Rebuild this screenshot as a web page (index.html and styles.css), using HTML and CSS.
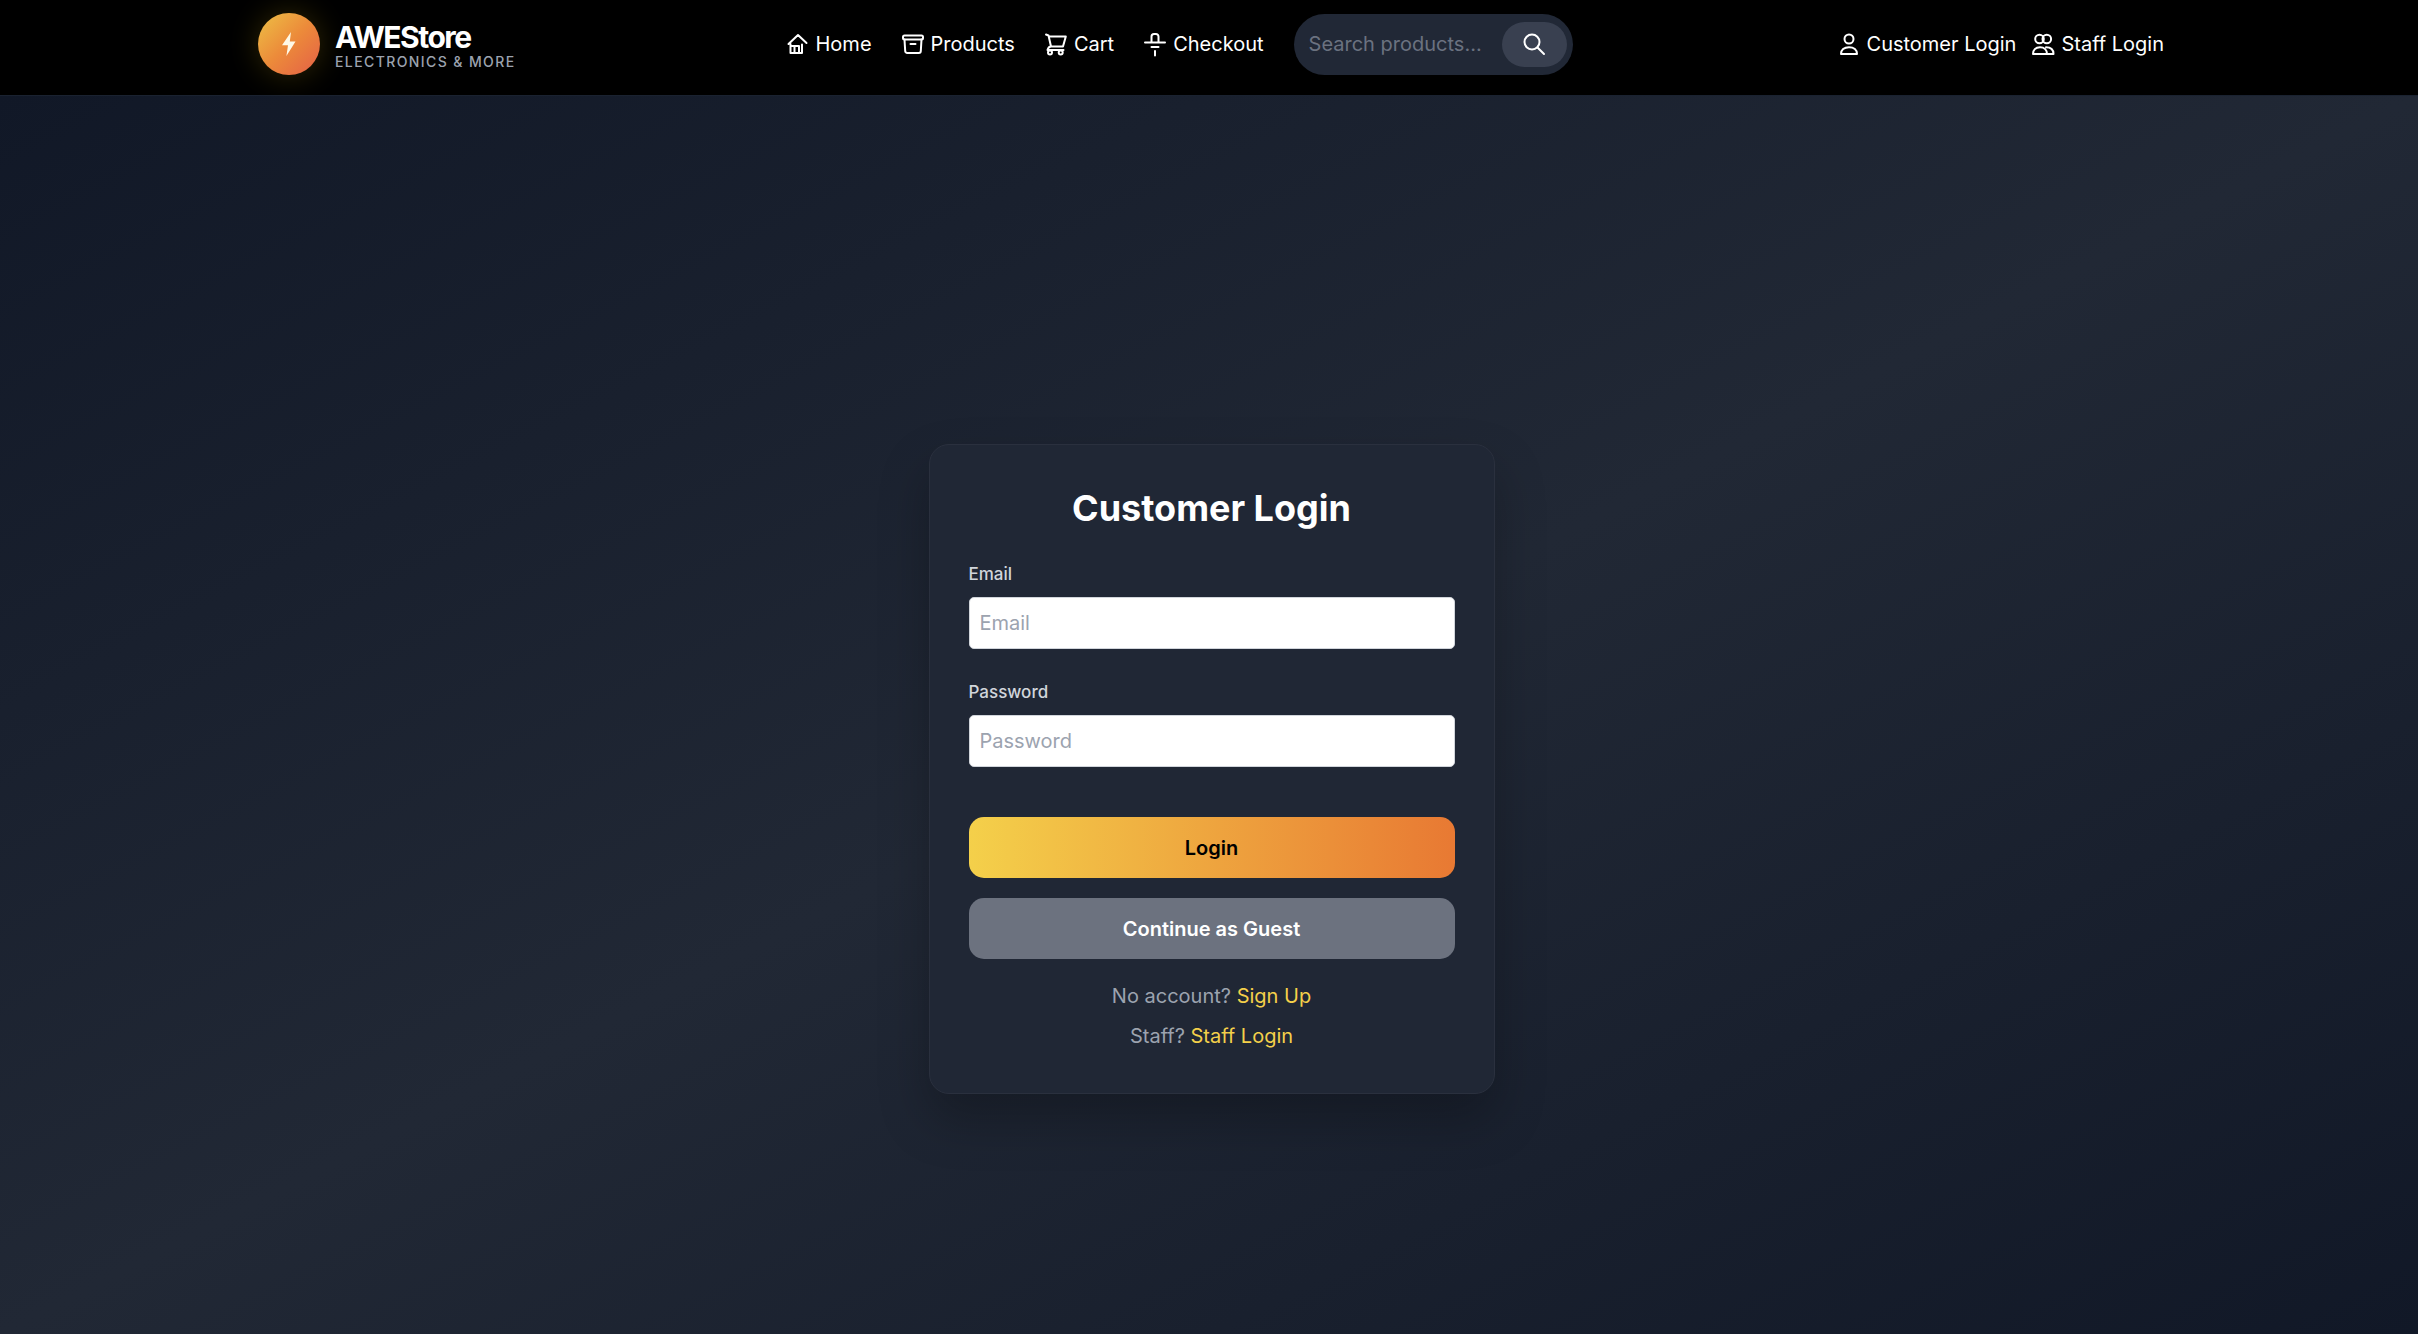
FILE: index.html
```html
<!DOCTYPE html>
<html lang="en">
<head>
<meta charset="utf-8">
<meta name="viewport" content="width=device-width, initial-scale=1">
<title>AWEStore - Customer Login</title>
<link rel="stylesheet" href="styles.css">
</head>
<body>
<header class="site-header">
  <div class="header-inner">
    <a class="brand" href="#">
      <span class="brand-mark">
        <svg class="bolt" viewBox="0 0 14 24" aria-hidden="true"><path d="M9 0 0 13.200h6L4.400 24 13.500 9.600H7.800z"/></svg>
      </span>
      <span class="brand-text">
        <span class="brand-name">AWEStore</span>
        <span class="brand-tag">Electronics &amp; More</span>
      </span>
    </a>
    <nav class="main-nav" aria-label="Main">
      <a class="nav-link" href="#"><svg class="icon" viewBox="0 0 22 22" aria-hidden="true"><path d="M1.500 11 11 2l8.500 8M3.500 11v9H15v-8.500M7.500 20v-7H12v7M3.500 13h4"/></svg>Home</a>
      <a class="nav-link" href="#"><svg class="icon" viewBox="0 0 22 22" aria-hidden="true"><rect x="1" y="2.500" width="20" height="4" rx="1.500"/><path d="M2.500 6.500 3.200 18a2 2 0 0 0 2 2h11.600a2 2 0 0 0 2-2l.7-11.500M8.500 11h5"/></svg>Products</a>
      <a class="nav-link" href="#"><svg class="icon" viewBox="0 0 22 22" aria-hidden="true"><path d="M1 1.500 3.500 2.500 6 13.500h12L20.800 3.500H3.700M6 13.500c-2 0-3 1.500-3.500 3.500h16"/><circle cx="5" cy="19.500" r="2"/><circle cx="15.700" cy="19.500" r="2"/></svg>Cart</a>
      <a class="nav-link" href="#"><svg class="icon" viewBox="0 0 22 22" aria-hidden="true"><path d="M1 9.500h20M7.500 9.500V3.500a2.500 2.500 0 0 1 2.500-2.500h2a2.500 2.500 0 0 1 2.500 2.500v6M7.500 14h7M11 18v4.500"/></svg>Checkout</a>
    </nav>
    <form class="search" role="search">
      <input class="search-input" type="search" placeholder="Search products..." aria-label="Search products">
      <button class="search-button" type="button" aria-label="Search"><svg class="icon" viewBox="0 0 22 22" aria-hidden="true"><circle cx="9" cy="9" r="7.500"/><path d="m14.500 14.500 6.500 6.500"/></svg></button>
    </form>
    <nav class="account-nav" aria-label="Account">
      <a class="nav-link" href="#"><svg class="icon" viewBox="0 0 22 22" aria-hidden="true"><circle cx="11" cy="6" r="4.500"/><path d="M3 21c0-4 3-6.800 8-6.800s8 2.800 8 6.800z"/></svg>Customer Login</a>
      <a class="nav-link" href="#"><svg class="icon" viewBox="0 0 22 22" aria-hidden="true"><circle cx="7.500" cy="6" r="4.300"/><circle cx="14.800" cy="6" r="4.300"/><path d="M1 21c0-4 2.500-6.800 7-6.800s7 2.800 7 6.800zM14 14.200c5 0 7.500 2.800 7.500 6.800H15"/></svg>Staff Login</a>
    </nav>
  </div>
</header>
<main class="page">
  <section class="card">
    <h1 class="card-title">Customer Login</h1>
    <form class="login-form">
      <div class="field">
        <label class="field-label" for="email">Email</label>
        <input class="field-input" id="email" type="email" placeholder="Email">
      </div>
      <div class="field">
        <label class="field-label" for="password">Password</label>
        <input class="field-input" id="password" type="password" placeholder="Password">
      </div>
      <div class="actions">
        <button class="button button-primary" type="button">Login</button>
        <button class="button button-guest" type="button">Continue as Guest</button>
      </div>
    </form>
    <div class="hints">
      <p>No account? <a href="#">Sign Up</a></p>
      <p>Staff? <a href="#">Staff Login</a></p>
    </div>
  </section>
</main>
</body>
</html>
```
FILE: styles.css
```css
*, *::before, *::after { box-sizing: border-box; }

body {
  margin: 0;
  min-height: 100vh;
  display: flex;
  flex-direction: column;
  background: #000;
  color: #fff;
  font: 20px/30px Inter, "Liberation Sans", sans-serif;
}

a { color: inherit; text-decoration: none; }
input, button { font: inherit; }

.site-header {
  background: #000;
  padding: 13px 254px 20px 258px;
  border-bottom: 1px solid #1a2230;
}

.header-inner {
  display: flex;
  align-items: center;
}

.brand { display: flex; align-items: center; gap: 15px; margin-right: 6px; }

.brand-mark {
  display: grid;
  place-items: center;
  width: 62px;
  height: 62px;
  border-radius: 50%;
  background: linear-gradient(135deg, #edc145, #ec8a3a 50%, #e45f47);
  box-shadow: 0 0 30px rgba(250, 204, 21, .2);
}

.bolt { width: 14px; height: 24px; fill: #fef9e7; }

.brand-text { display: flex; flex-direction: column; padding-top: 6px; }

.brand-name {
  font-size: 30px;
  line-height: 30px;
  font-weight: 700;
  letter-spacing: -.05em;
}

.brand-tag {
  color: #9ca3af;
  font-size: 14px;
  line-height: 20px;
  font-weight: 500;
  letter-spacing: .1em;
  text-transform: uppercase;
}

.main-nav { display: flex; gap: 30px; margin-left: auto; }

.nav-link { display: flex; align-items: center; gap: 7px; white-space: nowrap; }

.icon {
  width: 22px;
  height: 22px;
  flex: none;
  overflow: visible;
  fill: none;
  stroke: currentColor;
  stroke-width: 2;
  stroke-linecap: round;
  stroke-linejoin: round;
}

.search {
  display: flex;
  align-items: center;
  width: 279px;
  height: 61px;
  margin-left: 30px;
  padding: 0 6px 0 15px;
  border-radius: 31px;
  background: #212836;
}

.search-input {
  flex: 1;
  min-width: 0;
  padding: 0;
  border: 0;
  outline: 0;
  background: none;
  color: #fff;
}

.search-input::placeholder { color: #6b7280; opacity: 1; }

.search-button {
  display: grid;
  place-items: center;
  width: 65px;
  height: 45px;
  padding: 0;
  border: 0;
  border-radius: 23px;
  background: #394050;
  color: #fff;
}

.account-nav { display: flex; gap: 16px; margin-left: auto; }

.page {
  flex: 1;
  display: grid;
  place-items: center;
  padding: 108px 0 0 5px;
  background: linear-gradient(to bottom right, #111827, #212835 50%, #111827);
}

.card {
  width: 566px;
  padding: 40px 39px;
  border: 1px solid #2a303e;
  border-radius: 20px;
  background: #202735;
  box-shadow: 0 25px 50px rgba(0, 0, 0, .25);
}

.card-title {
  margin: 0 0 30px;
  font-size: 36px;
  line-height: 46px;
  font-weight: 700;
  text-align: center;
}

.login-form { display: grid; gap: 30px; }

.field { display: grid; gap: 10px; }

.field-label {
  color: #d1d5db;
  font-size: 17px;
  line-height: 26px;
  font-weight: 500;
}

.field-input {
  width: 100%;
  height: 52px;
  padding: 0 10px;
  border: 1px solid #d1d5db;
  border-radius: 5px;
  background: #fff;
  color: #111827;
}

.field-input::placeholder { color: #9ca3af; opacity: 1; }

.actions { display: grid; gap: 20px; padding-top: 20px; }

.button {
  width: 100%;
  height: 61px;
  border: 0;
  border-radius: 15px;
  font-weight: 600;
}

.button-primary { background: linear-gradient(to right, #f4d04a, #e87933); color: #000; }
.button-guest { background: #6c727f; color: #fff; }

.hints {
  display: grid;
  gap: 10px;
  padding: 22px 0 2px;
  color: #9ca3af;
  text-align: center;
}

.hints p { margin: 0; }
.hints a { color: #f4d04a; }
```
